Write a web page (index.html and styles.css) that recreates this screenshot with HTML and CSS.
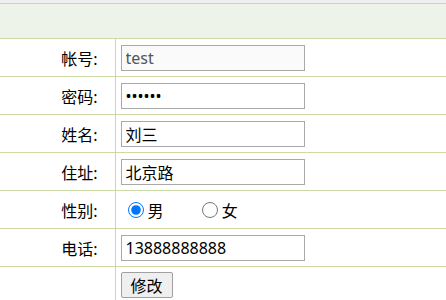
FILE: index.html
```html
<!DOCTYPE html>
<html lang="zh-CN">
<head>
<meta charset="UTF-8">
<meta name="viewport" content="width=device-width, initial-scale=1.0">
<title>修改信息</title>
<link rel="stylesheet" href="styles.css">
</head>
<body>

<div class="top-strip"></div>

<form>
    <table class="info-table">
        <tr class="head-row">
            <td colspan="2"></td>
        </tr>
        <tr>
            <td class="label">帐号:</td>
            <td class="field"><input type="text" class="readonly" value="test" readonly></td>
        </tr>
        <tr>
            <td class="label">密码:</td>
            <td class="field"><input type="password" value="123456"></td>
        </tr>
        <tr>
            <td class="label">姓名:</td>
            <td class="field"><input type="text" value="刘三"></td>
        </tr>
        <tr>
            <td class="label">住址:</td>
            <td class="field"><input type="text" value="北京路"></td>
        </tr>
        <tr>
            <td class="label">性别:</td>
            <td class="field">
                <label class="radio first"><input type="radio" name="sex" checked>男</label>
                <label class="radio"><input type="radio" name="sex">女</label>
            </td>
        </tr>
        <tr>
            <td class="label">电话:</td>
            <td class="field"><input type="text" value="13888888888"></td>
        </tr>
        <tr class="btn-row">
            <td class="label"></td>
            <td class="field"><button type="button">修改</button></td>
        </tr>
    </table>
</form>

</body>
</html>
```

FILE: styles.css
```css
body {
    margin: 0;
    padding: 0;
    background-color: #fff;
    font-family: "Microsoft YaHei", "Noto Sans", "Noto Sans CJK SC", sans-serif;
    font-size: 16px;
    color: #000;
}
.top-strip {
    height: 3px;
    background-color: #efefef;
}
.info-table {
    width: 100%;
    border-collapse: collapse;
    border-spacing: 0;
}
.info-table td {
    border-top: 1px solid #cbd9a7;
    border-bottom: 1px solid #cbd9a7;
    padding: 0;
    height: 38px;
    box-sizing: border-box;
    vertical-align: middle;
}
.head-row td {
    height: 35px;
    background-color: #eef3e9;
}
.label {
    width: 115px;
    text-align: right;
    padding-right: 17px !important;
    border-right: 1px solid #cbd9a7;
    box-sizing: border-box;
}
.field {
    padding-left: 5px !important;
}
.field input[type="text"],
.field input[type="password"] {
    width: 184px;
    height: 26px;
    box-sizing: border-box;
    border: 1px solid #a9a9a9;
    padding: 0 4px;
    margin: 0;
    font-family: inherit;
    font-size: 16px;
    color: #000;
    display: block;
}
.field input.readonly {
    background-color: #fafafa;
    color: #555;
}
.radio {
    display: inline-flex;
    align-items: center;
    height: 26px;
}
.radio.first {
    margin-left: 7px;
    margin-right: 34px;
}
.radio input {
    width: 16px;
    height: 16px;
    margin: 0 4px 0 0;
}
.btn-row td {
    height: 36px;
    vertical-align: top;
    padding-top: 5px;
    border-bottom: none;
}
button {
    height: 26px;
    padding: 0 9px;
    border: 1px solid #a0a0a0;
    border-radius: 2px;
    background-color: #efefef;
    font-family: inherit;
    font-size: 16px;
    color: #000;
    margin: 0;
}
```
